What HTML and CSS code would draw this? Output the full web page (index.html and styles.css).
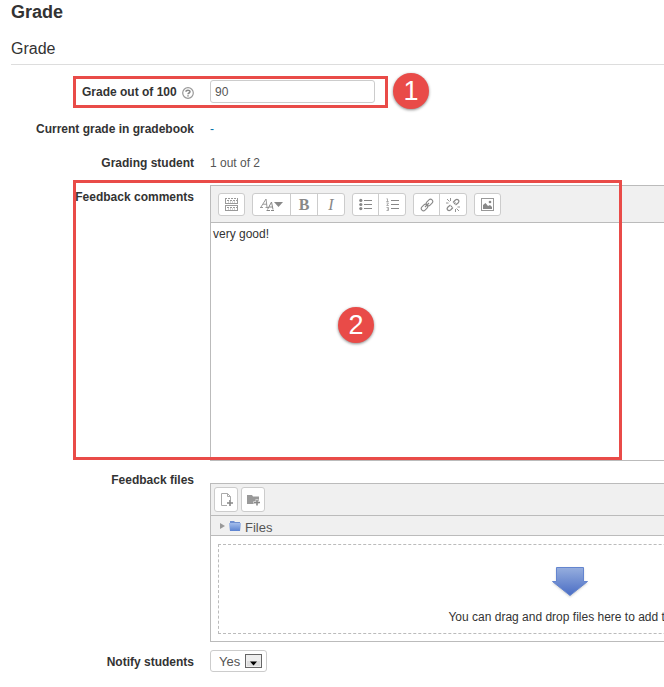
FILE: index.html
```
<!DOCTYPE html>
<html lang="en">
<head>
    <meta charset="UTF-8">
    <title>Grade</title>
    <link rel="stylesheet" href="styles.css">
</head>
<body>
    <h2>Grade</h2>
    <form class="grade-form">
        <h3>Grade</h3>

        <div class="row row-grade">
            <div class="label">
                <label for="grade">Grade out of 100</label>
                <a class="help" href="#" aria-label="Help">
                    <svg width="12" height="12" viewBox="0 0 12 12">
                        <circle cx="6" cy="6" r="5.3" fill="none" stroke="#999" stroke-width="1.2"/>
                        <path d="M4 4.8C4 2.6 8 2.6 8 4.7C8 6 6 6 6 7.3M6 8.2V9.6" fill="none" stroke="#888" stroke-width="1.5"/>
                    </svg>
                </a>
            </div>
            <input type="text" id="grade" class="grade-input" value="90">
            <div class="mark mark-grade"><span class="num">1</span></div>
        </div>

        <div class="row row-current">
            <div class="label">Current grade in gradebook</div>
            <div><a href="#">-</a></div>
        </div>

        <div class="row row-student">
            <div class="label">Grading student</div>
            <div class="static">1 out of 2</div>
        </div>

        <div class="row row-comments">
            <div class="label"><label for="comments">Feedback comments</label></div>
            <div class="editor">
                <div class="toolbar">
                    <div class="group">
                        <button type="button" aria-label="Show more buttons">
                            <svg width="13" height="13" viewBox="0 0 13 13">
                                <path d="M.5 0V6M12.5 0V6M.5 7V13M12.5 7V13M0 5.5H13M0 7.5H13M0 12.5H13" fill="none" stroke="#999"/>
                                <path d="M0 .5H13M2 2.5H12M2 9.5H12" fill="none" stroke="#999" stroke-dasharray="2 1"/>
                                <path d="M3 4H11M3 11H11" fill="none" stroke="#aaa" stroke-dasharray="1 1"/>
                            </svg>
                        </button>
                    </div>
                    <div class="group">
                        <button type="button" class="wide" aria-label="Paragraph styles">
                            <svg width="24" height="14" viewBox="0 0 24 14">
                                <path d="M1 9L6 1L7 9M3 6.2H7M0 9.5H3M5.5 9.5H8" fill="none" stroke="#999"/>
                                <path d="M7.5 11.5L11.5 4L13 11.5M9 9H12.5M6.5 12.5H10M11 12.5H14" fill="none" stroke="#888"/>
                                <path d="M14 4H23L18.5 9Z" fill="#888"/>
                            </svg>
                        </button>
                        <button type="button" class="bold">B</button>
                        <button type="button" class="italic">I</button>
                    </div>
                    <div class="group">
                        <button type="button" aria-label="Unordered list">
                            <svg width="13" height="13" viewBox="0 0 13 13">
                                <path d="M5 2.5H13M5 6.5H13M5 10.5H13" stroke="#888"/>
                                <circle cx="1.8" cy="2.4" r="1.6" fill="#888"/>
                                <circle cx="1.8" cy="6.5" r="1.6" fill="#888"/>
                                <circle cx="1.8" cy="10.6" r="1.6" fill="#888"/>
                            </svg>
                        </button>
                        <button type="button" aria-label="Ordered list">
                            <svg width="13" height="13" viewBox="0 0 13 13">
                                <path d="M5 2.5H13M5 6.5H13M5 10.5H13" stroke="#888"/>
                                <path d="M.5 .8H1.5V3.5M.3 3.5H2.7M.5 5H2.5L.7 7.5H2.8M.5 9.5H2.5V12.5H.5M1 11H2.5" fill="none" stroke="#999" stroke-width=".8"/>
                            </svg>
                        </button>
                    </div>
                    <div class="group">
                        <button type="button" aria-label="Link">
                            <svg width="14" height="14" viewBox="0 0 14 14">
                                <g fill="none" stroke="#888" stroke-width="1.1">
                                    <rect x="5.9" y="2.3" width="7.2" height="4.4" rx="2.2" transform="rotate(-45 9.5 4.5)"/>
                                    <rect x=".9" y="7.3" width="7.2" height="4.4" rx="2.2" transform="rotate(-45 4.5 9.5)"/>
                                    <path d="M5 9L9 5"/>
                                </g>
                            </svg>
                        </button>
                        <button type="button" aria-label="Unlink">
                            <svg width="14" height="14" viewBox="0 0 14 14">
                                <g fill="none" stroke="#888" stroke-width="1.2">
                                    <path d="M7 4.5L9.4 2Q11 .8 12.3 2T12 5L9.5 7M7 9.5L4.6 12Q3 13.2 1.7 12T2 9L4.5 7"/>
                                    <path d="M5 9L6 8M8 6L9.5 4.5"/>
                                    <path d="M4.5 0V3M1 1L3.5 3.5M0 5H2.5M9.5 11V14M10.5 10.5L13 13M11.5 9H14" stroke-width=".9"/>
                                </g>
                            </svg>
                        </button>
                    </div>
                    <div class="group">
                        <button type="button" aria-label="Image">
                            <svg width="13" height="13" viewBox="0 0 13 13">
                                <rect x=".5" y=".5" width="12" height="12" fill="none" stroke="#999"/>
                                <path d="M2 11V7L4.5 5L7 8L9 7L11 9V11Z" fill="#888"/>
                                <circle cx="9" cy="4" r="1.3" fill="#888"/>
                            </svg>
                        </button>
                    </div>
                </div>
                <textarea id="comments">very good!</textarea>
            </div>
            <div class="mark mark-comments"><span class="num">2</span></div>
        </div>

        <div class="row row-files">
            <div class="label">Feedback files</div>
            <div class="filemanager">
                <div class="file-tools">
                    <button type="button" aria-label="Add file">
                        <svg width="13" height="13" viewBox="0 0 13 13">
                            <path d="M7 12.5H1.5V.5H7.5L10.5 3.5V7M7.5 .5V3.5H10.5" fill="none" stroke="#aaa"/>
                            <path d="M7 10H13M10 7V13" stroke="#888" stroke-width="1.6"/>
                        </svg>
                    </button>
                    <button type="button" aria-label="Create folder">
                        <svg width="13" height="12" viewBox="0 0 13 12">
                            <path d="M0 1H5L6 2.5H12V10H0Z" fill="#999"/>
                            <path d="M6.5 8.5H13M10 5V12" stroke="#fff" stroke-width="2.6"/>
                            <path d="M7 8.5H13M10 5.5V11.5" stroke="#888" stroke-width="1.6"/>
                        </svg>
                    </button>
                </div>
                <div class="file-path">
                    <svg width="5" height="6" viewBox="0 0 5 6"><path d="M0 0L5 3L0 6Z" fill="#999"/></svg>
                    <svg width="12" height="10" viewBox="0 0 12 10">
                        <defs>
                            <linearGradient id="folder" x2="0" y2="1">
                                <stop offset="0" stop-color="#a3bdec"/>
                                <stop offset="1" stop-color="#5b82d0"/>
                            </linearGradient>
                        </defs>
                        <path d="M1 0H5L6 1H11V5H1Z" fill="#6f8fd0"/>
                        <path d="M0 2H12L11 10H1Z" fill="url(#folder)"/>
                    </svg>
                    <a href="#">Files</a>
                </div>
                <div class="dropzone">
                    <svg width="40" height="36" viewBox="0 0 40 36">
                        <defs>
                            <linearGradient id="arrow" x2="0" y2="1">
                                <stop offset="0" stop-color="#96aede"/>
                                <stop offset="1" stop-color="#4a6dc4"/>
                            </linearGradient>
                        </defs>
                        <path d="M6.5 3.5H33.5V17.5H38L20 32L2 17.5H6.5Z" class="arrow-shadow"/>
                        <path d="M6.5 2.5H33.5V16.5H37.5L20 30.5L2.5 16.5H6.5Z" fill="url(#arrow)" stroke="#6485cf"/>
                    </svg>
                    <div>You can drag and drop files here to add them.</div>
                </div>
            </div>
        </div>

        <div class="row row-notify">
            <div class="label"><label for="notify">Notify students</label></div>
            <div class="select">
                <select id="notify">
                    <option>Yes</option>
                    <option>No</option>
                </select>
                <svg width="17" height="14" viewBox="0 0 17 14">
                    <rect x=".5" y=".5" width="16" height="13" fill="#eee" stroke="#666"/>
                    <path d="M2 7H15V12H2Z" fill="#ddd"/>
                    <path d="M5 7.5H12L8.5 11.5Z" fill="#000"/>
                </svg>
            </div>
        </div>
    </form>
</body>
</html>
```

FILE: styles.css
```
body {
    margin: 0;
    padding: 0 0 0 11px;
    overflow: hidden;
    background: #fff;
    color: #333;
    font: 12px/20px "Liberation Sans", Arial, sans-serif;
}
h2 {
    margin: 0;
    font-size: 18px;
    line-height: 24px;
}
h3 {
    margin: 12px 0 0;
    padding-bottom: 3px;
    border-bottom: 1px solid #ddd;
    font-size: 16px;
    font-weight: normal;
    line-height: 25px;
}
a {
    color: #0070a8;
    text-decoration: none;
}
input, select, textarea, button {
    box-sizing: border-box;
    margin: 0;
    font-family: inherit;
    color: #555;
}

/* form rows */
.row {
    display: grid;
    grid-template-columns: 183px minmax(0, 1fr);
    column-gap: 16px;
    position: relative;
}
.label {
    font-weight: bold;
    text-align: right;
    white-space: nowrap;
}
.help svg {
    margin-left: 2px;
    vertical-align: -3px;
}
.row-grade {
    margin-top: 15px;
    align-items: center;
}
.row-current {
    margin-top: 16px;
}
.row-student {
    margin-top: 14px;
}
.static {
    color: #555;
}
.row-comments {
    margin-top: 12px;
}
.row-comments .label, .row-notify .label {
    padding-top: 2px;
}
.row-files {
    margin-top: 22px;
}
.row-files .label {
    margin-top: -13px;
}
.row-notify {
    margin-top: 8px;
}
.grade-input {
    width: 165px;
    height: 23px;
    padding: 0 4px;
    border: 1px solid #ccc;
    border-radius: 3px;
    font-size: 12px;
}

/* editor */
.editor {
    border: 1px solid #bbb;
    border-right: 0;
}
.toolbar {
    display: flex;
    gap: 7px;
    padding: 7px 7px 6px;
    background: #f0f0f0;
    border-bottom: 1px solid #bbb;
}
.group {
    display: flex;
    border: 1px solid #ccc;
    border-radius: 3px;
    background: #fff;
}
.group button {
    display: flex;
    align-items: center;
    justify-content: center;
    width: 25px;
    height: 21px;
    padding: 0;
    border: 0;
    background: none;
}
.group button + button {
    width: 27px;
    border-left: 1px solid #ccc;
}
.group .wide {
    width: 37px;
}
.group .bold, .group .italic {
    color: #888;
    font: bold 16px/20px "Liberation Serif", serif;
}
.group .italic {
    font-weight: normal;
    font-style: italic;
}
.editor textarea {
    display: block;
    width: 100%;
    height: 237px;
    padding: 1px 2px;
    border: 0;
    outline: 0;
    resize: none;
    color: #333;
    font-size: 12px;
    line-height: 20px;
}

/* file manager */
.filemanager {
    min-width: 718px;
    border: 1px solid #bbb;
}
.file-tools {
    display: flex;
    gap: 3px;
    padding: 3px;
    background: #f0f0f0;
    border-bottom: 1px solid #bbb;
}
.file-tools button {
    display: flex;
    align-items: center;
    justify-content: center;
    width: 24px;
    height: 25px;
    padding: 0;
    border: 1px solid #ccc;
    border-radius: 3px;
    background: #fff;
}
.file-path {
    display: flex;
    gap: 4px;
    height: 19px;
    padding-left: 9px;
    align-items: center;
    background: #f0f0f0;
    border-bottom: 1px solid #bbb;
}
.file-path a {
    padding-top: 4px;
    color: #555;
    font-size: 13px;
}
.dropzone {
    margin: 8px 7px 7px;
    padding: 20px 0 6px;
    border: 1px dashed #bbb;
    text-align: center;
}
.dropzone svg {
    display: block;
    margin: 0 auto 6px;
}
.arrow-shadow {
    fill: #ccc;
    filter: blur(1px);
}

.select {
    display: flex;
    align-items: center;
}
.select select {
    width: 57px;
    height: 22px;
    padding: 1px 8px 0;
    border: 1px solid #ccc;
    border-radius: 3px;
    background: #fff;
    appearance: none;
    font-size: 13px;
}
.select svg {
    margin-left: -22px;
    pointer-events: none;
}

/* numbered callouts over the form */
.mark {
    position: absolute;
    left: 62px;
    border: 3px solid #e94b48;
    pointer-events: none;
}
.mark-grade {
    top: -4px;
    width: 309px;
    height: 26px;
}
.mark-comments {
    top: -5px;
    width: 543px;
    height: 274px;
}
.num {
    position: absolute;
    width: 36px;
    height: 36px;
    border-radius: 50%;
    background: #e94b48;
    box-shadow: 0 1px 3px #888;
    color: #fff;
    font-size: 27px;
    line-height: 36px;
    text-align: center;
}
.mark-grade .num {
    top: -6px;
    left: 317px;
}
.mark-comments .num {
    top: 124px;
    left: 262px;
}
```
